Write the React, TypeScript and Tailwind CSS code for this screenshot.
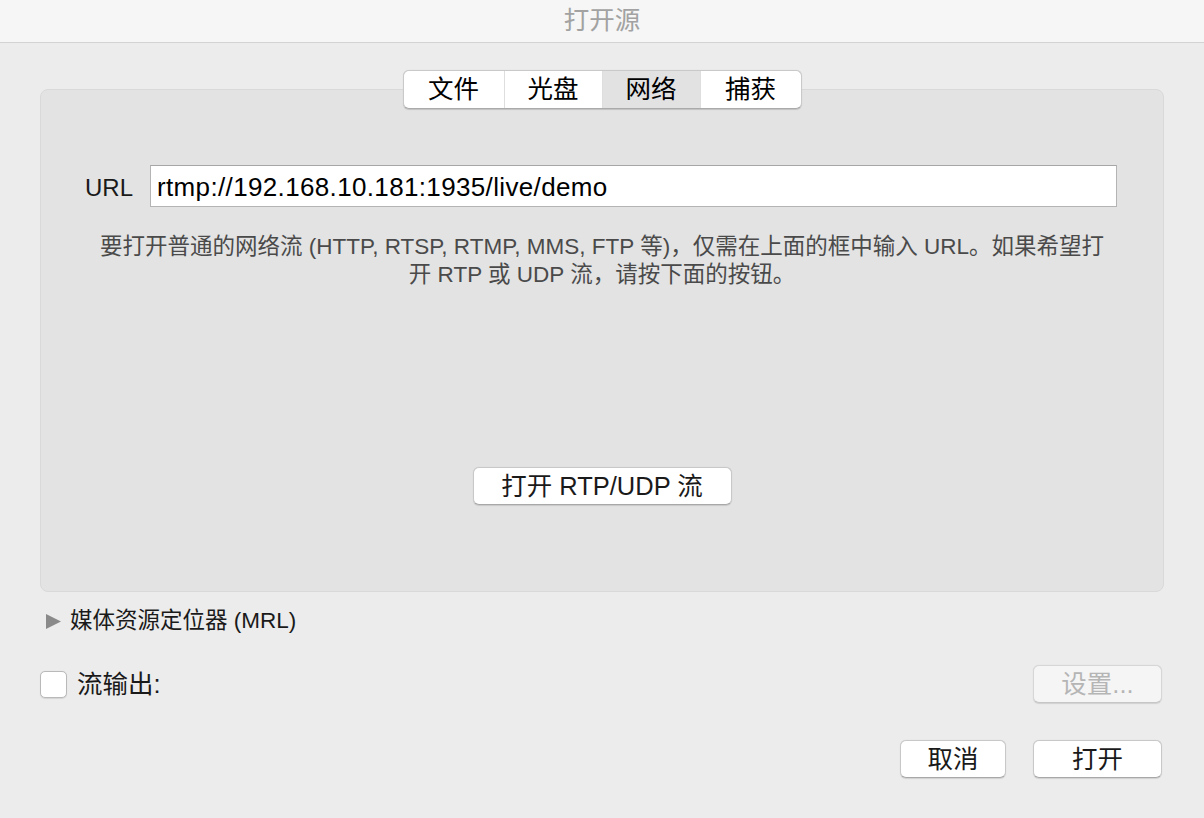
import React from "react";

const FONT = '"Liberation Sans", "Noto Sans CJK SC", sans-serif';

function Btn({ children, className = "", disabled = false }: { children: React.ReactNode; className?: string; disabled?: boolean }) {
  return (
    <div
      className={
        "flex items-center justify-center h-[38px] rounded-[6px] border border-[#c8c8c8] border-b-[#a8a8a8] shadow-[0_0.5px_1px_rgba(0,0,0,0.12)] text-[25.5px] " +
        (disabled ? "bg-[#f5f5f5] text-[#b5b5b5] border-[#d6d6d6] border-b-[#c6c6c6]" : "bg-white text-[#1a1a1a]") +
        " " +
        className
      }
    >
      {children}
    </div>
  );
}

export default function App() {
  const tabs = [
    { label: "文件", w: "w-[100px]" },
    { label: "光盘", w: "w-[98px]" },
    { label: "网络", w: "w-[98px]", active: true },
    { label: "捕获", w: "w-[101px]" },
  ];
  return (
    <div className="w-[1204px] h-[818px] bg-[#ececec] flex flex-col overflow-hidden" style={{ fontFamily: FONT }}>
      <div className="h-[43px] shrink-0 bg-[#f6f6f6] border-b border-[#d3d3d3] flex items-center justify-center">
        <span className="text-[25.5px] text-[#a2a2a2] leading-none">打开源</span>
      </div>

      <div className="relative z-10 mt-[27px] flex justify-center">
        <div className="flex h-[39px] rounded-[6px] bg-white border border-[#c9c9c9] border-b-[#aaaaaa] shadow-[0_0.5px_1px_rgba(0,0,0,0.15)] overflow-hidden">
          {tabs.map((t, i) => (
            <div
              key={t.label}
              className={
                "flex items-center justify-center text-[25.5px] text-black " +
                t.w +
                (t.active ? " bg-[#e2e2e2]" : "") +
                (i > 0 ? " border-l border-[#dedede]" : "")
              }
            >
              {t.label}
            </div>
          ))}
        </div>
      </div>

      <div className="mx-[40px] -mt-[20px] h-[503px] shrink-0 rounded-[8px] bg-[#e3e3e3] border border-[#d9d9d9] flex flex-col">
        <div className="mt-[75px] flex items-center pl-[44px] pr-[46px]">
          <span className="text-[24px] text-[#1a1a1a] pt-[3px]">URL</span>
          <div className="ml-[17px] flex-1 h-[42px] bg-white border border-[#b4b4b4] border-t-[#a6a6a6] flex items-center pl-[6px] pt-[3px]">
            <span className="text-[26px] text-black tracking-[0.35px]">rtmp://192.168.10.181:1935/live/demo</span>
          </div>
        </div>
        <div className="mt-[26px] text-center text-[22.5px] leading-[28px] text-[#4a4a4a]">
          要打开普通的网络流 (HTTP, RTSP, RTMP, MMS, FTP 等)，仅需在上面的框中输入 URL。如果希望打
          <br />
          开 RTP 或 UDP 流，请按下面的按钮。
        </div>
        <div className="mt-[178px] flex justify-center">
          <Btn className="w-[259px]">打开 RTP/UDP 流</Btn>
        </div>
      </div>

      <div className="mt-[15px] h-[28px] flex items-center pl-[46px]">
        <svg width="15" height="15" viewBox="0 0 15 15" className="shrink-0">
          <polygon points="0,0 15,7.5 0,15" fill="#8a8a8a" />
        </svg>
        <span className="ml-[9px] text-[22.5px] text-[#1a1a1a]">媒体资源定位器 (MRL)</span>
      </div>

      <div className="mt-[30px] h-[38px] flex items-center pl-[40px] pr-[42px]">
        <div className="w-[27px] h-[27px] rounded-[5px] bg-white border border-[#b9b9b9] shadow-[0_0.5px_1px_rgba(0,0,0,0.1)]" />
        <span className="ml-[10px] text-[25.5px] text-[#1a1a1a]">流输出:</span>
        <div className="flex-1" />
        <Btn disabled className="w-[129px]">设置...</Btn>
      </div>

      <div className="mt-[37px] flex justify-end pr-[42px] gap-[27px]">
        <Btn className="w-[106px]">取消</Btn>
        <Btn className="w-[129px]">打开</Btn>
      </div>
    </div>
  );
}
